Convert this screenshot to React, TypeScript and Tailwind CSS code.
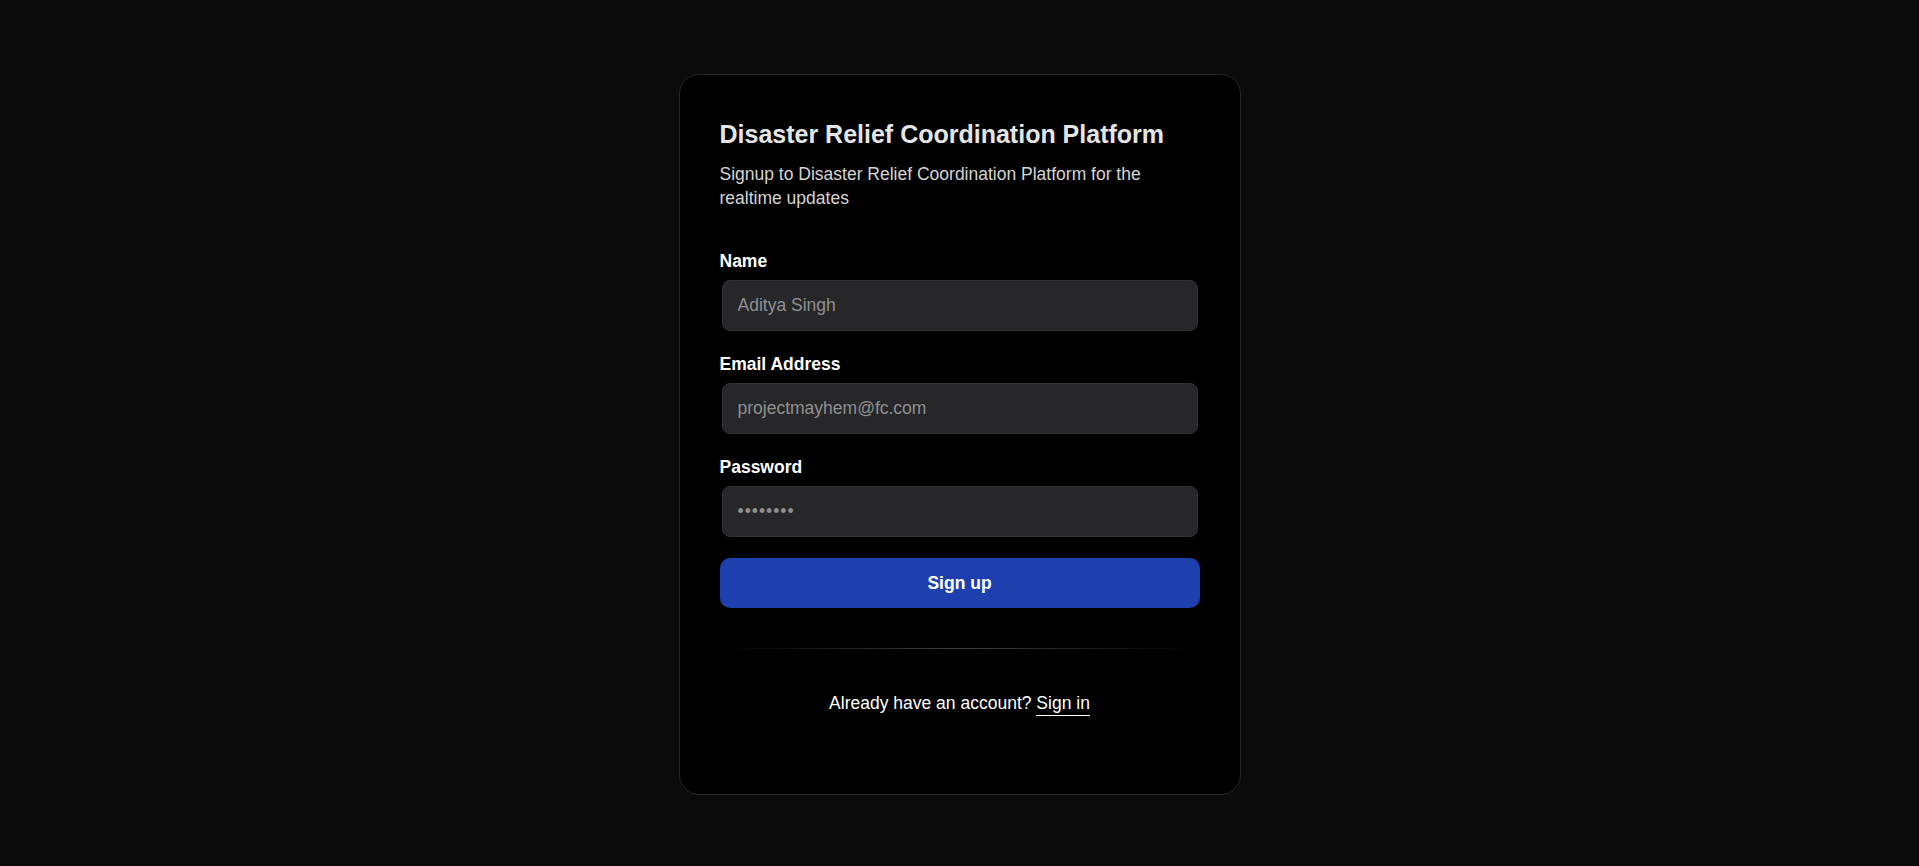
export default function App() {
  return (
    <div className="min-h-screen bg-[#0b0b0b] flex justify-center pt-[74px] font-['Segoe_UI','Liberation_Sans',Arial,sans-serif]">
      <div className="w-[562px] h-[721px] bg-black border border-[#262626] rounded-[20px] px-10 pt-[42px]">
        <h2 className="text-[25px] leading-[35px] font-bold text-[#e5e5e5]">Disaster Relief Coordination Platform</h2>
        <p className="mt-[10px] max-w-[480px] text-[17.5px] leading-[24px] text-[#d4d4d4]">
          Signup to Disaster Relief Coordination Platform for the realtime updates
        </p>

        <form className="mt-[42px]" onSubmit={(e) => e.preventDefault()}>
          <div className="flex flex-col gap-[8px] mb-[22px]">
            <label htmlFor="name" className="text-[17.5px] leading-[18px] font-bold text-white">Name</label>
            <div className="p-[2px]">
              <input
                id="name"
                type="text"
                placeholder="Aditya Singh"
                className="h-[51px] w-full rounded-[8px] border border-[#323236] bg-[#27272a] px-[15px] text-[17.5px] text-white placeholder:text-[#8f8f8f] outline-none"
              />
            </div>
          </div>
          <div className="flex flex-col gap-[8px] mb-[22px]">
            <label htmlFor="email" className="text-[17.5px] leading-[18px] font-bold text-white">Email Address</label>
            <div className="p-[2px]">
              <input
                id="email"
                type="email"
                placeholder="projectmayhem@fc.com"
                className="h-[51px] w-full rounded-[8px] border border-[#323236] bg-[#27272a] px-[15px] text-[17.5px] text-white placeholder:text-[#8f8f8f] outline-none"
              />
            </div>
          </div>
          <div className="flex flex-col gap-[8px] mb-[19px]">
            <label htmlFor="password" className="text-[17.5px] leading-[18px] font-bold text-white">Password</label>
            <div className="p-[2px]">
              <input
                id="password"
                type="password"
                placeholder="••••••••"
                className="h-[51px] w-full rounded-[8px] border border-[#323236] bg-[#27272a] px-[15px] text-[17.5px] tracking-[1px] text-white placeholder:text-[#8f8f8f] outline-none"
              />
            </div>
          </div>

          <button
            type="submit"
            className="h-[50px] w-full rounded-[10px] bg-[#1e40af] text-[17.5px] font-bold text-white"
          >
            Sign up
          </button>

          <div className="mt-10 h-px w-full bg-gradient-to-r from-transparent via-[#404040] to-transparent" />

          <p className="mt-[42px] text-center text-[17.5px] leading-[25px] text-white">
            Already have an account?{" "}
            <a href="#" className="border-b border-white pb-[2px]">Sign in</a>
          </p>
        </form>
      </div>
    </div>
  );
}
